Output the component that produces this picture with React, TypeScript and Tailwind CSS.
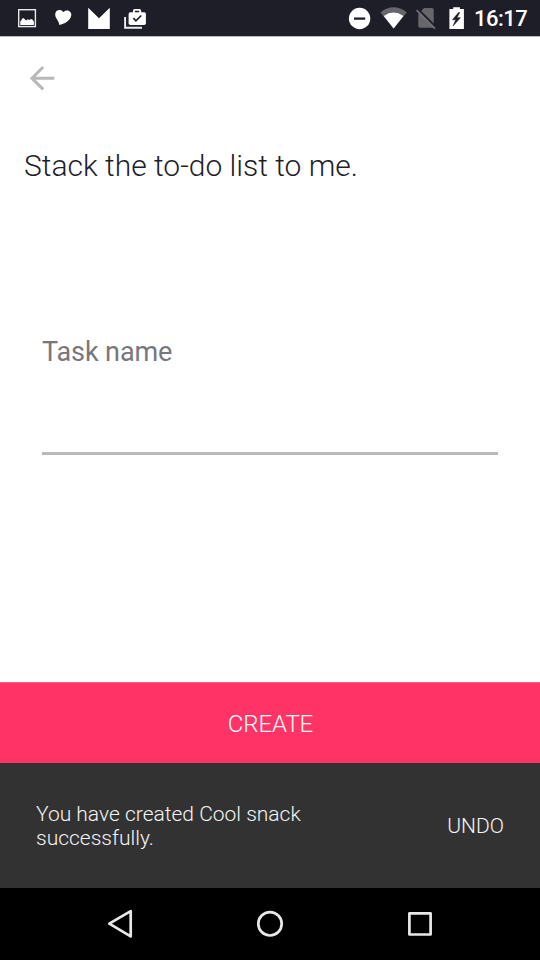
function StatusBar() {
  return (
    <header className="flex h-9 shrink-0 items-center justify-between bg-[#1e1e28] text-white">
      <div className="flex items-center gap-3 pl-[15px]">
        <svg width="24" height="36" viewBox="15 0 24 36">
          <rect x="18.7" y="9.7" width="16.7" height="16.9" fill="none" stroke="#e8e8ea" strokeWidth="1.4" />
          <path d="M20.3 25v-3.6l2.5-3.4 1 .2 2.2 2.4 1.9-1.3 1.4.7 1.7-1 1.4.6 1.5 2.2V25z" fill="white" />
        </svg>
        <svg width="24" height="36" viewBox="51 0 24 36">
          <path d="M59.3 25C59.2 20.5 55.2 18.9 55.2 14.2C55.2 9.8 61 8.4 63.3 12C66.4 8.6 71.7 11 71.3 15C70.9 20.3 64.1 24.2 59.3 25z" fill="white" />
        </svg>
        <svg width="24" height="36" viewBox="87 0 24 36">
          <path d="M88.2 7.8L99 18.2L109.8 7.8V29H88.2z" fill="white" />
        </svg>
        <svg width="24" height="36" viewBox="123 0 24 36">
          <path d="M125.1 17V27.8H142" fill="none" stroke="#eeeeef" strokeWidth="1.9" />
          <path d="M133.9 13V10.8Q133.9 9.9 134.8 9.9H139.3Q140.2 9.9 140.2 10.8V13" fill="none" stroke="white" strokeWidth="1.9" />
          <rect x="128.6" y="12.2" width="17.3" height="12.8" rx="1.8" fill="white" />
          <path d="M133.4 18.1l2.5 2.7 5.4-5.3" fill="none" stroke="#1e1e28" strokeWidth="1.7" />
        </svg>
      </div>
      <div className="flex items-center pr-[13px]">
        <svg width="24" height="36" viewBox="348 0 24 36">
          <circle cx="359.6" cy="18.5" r="10.7" fill="white" />
          <path d="M354 18.6h11.2" stroke="#1e1e28" strokeWidth="2.3" />
        </svg>
        <svg className="ml-[7px]" width="29" height="36" viewBox="379 0 29 36">
          <path d="M380.4 12.4Q393.6 2.2 406.8 12.4L393.6 28.5z" fill="#66666b" />
          <path d="M383.8 16Q393.6 9.2 403.4 16L393.6 28.5z" fill="white" />
        </svg>
        <svg className="ml-[7px]" width="22" height="36" viewBox="415 0 22 36">
          <path d="M424.1 8.1H432Q433.7 8.1 433.7 9.8V27.7H420Q418.3 27.7 418.3 26V13.8z" fill="#66666b" />
          <path d="M417.8 9l18.2 18.3" stroke="#1e1e28" strokeWidth="2.2" />
          <path d="M416.6 10.1l18.4 18.5" stroke="#707075" strokeWidth="1.7" />
        </svg>
        <svg className="ml-[11px]" width="17" height="36" viewBox="448 0 17 36">
          <path d="M453.2 7.2h6.7V9h4V29.1h-14.5V9h3.8z" fill="white" />
          <path d="M458.5 12.5L452.4 19.8h3.3L453 26l7.5-8.3h-3.5L459.8 12.5z" fill="#1e1e28" stroke="#1e1e28" strokeWidth="0.5" />
        </svg>
        <span className="mt-[2px] ml-[9px] w-[53px] text-[22px] leading-none font-medium tracking-[-0.5px] whitespace-nowrap">16:17</span>
      </div>
    </header>
  );
}

function NavigationBar() {
  return (
    <nav className="flex h-[72px] shrink-0 items-center justify-around bg-black px-[45px]">
      <button aria-label="Back" className="flex w-[150px] justify-center">
        <svg width="30" height="32" viewBox="0 0 30 32" fill="none" stroke="#e8e8e8" strokeWidth="2.7" strokeLinejoin="round">
          <path d="M4.3 15.7L25.7 3.1V28.4z" />
        </svg>
      </button>
      <button aria-label="Home" className="flex w-[150px] justify-center">
        <svg width="30" height="32" viewBox="0 0 30 32" fill="none" stroke="#e8e8e8" strokeWidth="2.7">
          <circle cx="15" cy="15.8" r="11.7" />
        </svg>
      </button>
      <button aria-label="Recent apps" className="flex w-[150px] justify-center">
        <svg width="30" height="32" viewBox="0 0 30 32" fill="none" stroke="#e8e8e8" strokeWidth="2.7" strokeLinejoin="round">
          <rect x="4.4" y="5.3" width="21.2" height="21.2" />
        </svg>
      </button>
    </nav>
  );
}

export default function App() {
  return (
    <div className="flex h-[960px] w-[540px] flex-col overflow-hidden bg-white font-['Roboto',sans-serif]">
      <StatusBar />
      <main className="flex flex-1 flex-col border-t border-[#bcbcbf] pt-[25px]">
        <button aria-label="Back" className="ml-6 h-8 w-9">
          <svg width="36" height="32" viewBox="24 62 36 32" fill="none" stroke="#b8b8b8" strokeWidth="3">
            <path d="M54.3 78.2H32.3M43.2 67L32 78.2L43.2 89.4" />
          </svg>
        </button>
        <h1 className="mt-[54px] ml-6 text-[30px] leading-9 font-light text-[#1e1e28]">Stack the to-do list to me.</h1>
        <label className="mx-[42px] mt-[152px] flex flex-col text-[27px] leading-8 tracking-[-0.1px] text-[#77777d]">
          Task name
          <input className="mt-[35px] h-[52px] w-full border-b-[3px] border-[#b8baba] outline-none" />
        </label>
      </main>
      <button className="h-[81px] shrink-0 border-t border-[#ff5c82] bg-[#ff3366] pt-px pl-px text-2xl font-light tracking-[-0.1px] text-white">
        CREATE
      </button>
      <section className="flex h-[125px] shrink-0 items-center justify-between bg-[#323232] px-9 text-[21px] font-light text-[#f5f5f5]">
        <p className="leading-[24px]">
          You have created Cool snack
          <br />
          successfully.
        </p>
        <button className="pt-0.5">UNDO</button>
      </section>
      <NavigationBar />
    </div>
  );
}
